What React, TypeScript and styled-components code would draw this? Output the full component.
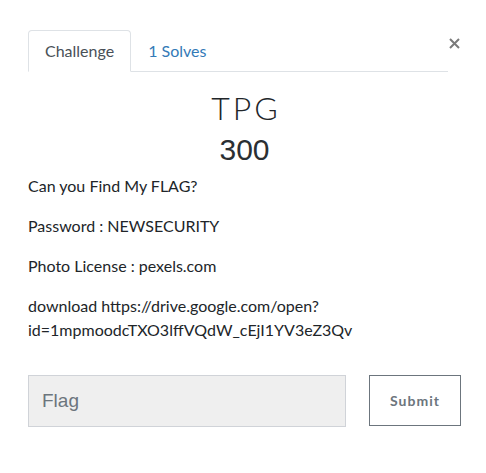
import React from "react";
import styled, { createGlobalStyle } from "styled-components";

const Global = createGlobalStyle`
  html, body { margin: 0; padding: 0; background: #fff; }
  body { font-family: Lato, "Noto Sans", sans-serif; color: #212529; }
  * { box-sizing: border-box; }
`;

const Modal = styled.div`
  width: 486px;
  padding: 30px 25px 0 28px;
`;

const Header = styled.div`
  display: flex;
  align-items: flex-start;
`;

const Tabs = styled.ul`
  flex: 1;
  display: flex;
  list-style: none;
  margin: 0;
  padding: 0;
  border-bottom: 1px solid #dee2e6;
`;

const Tab = styled.li<{ $active?: boolean }>`
  margin-bottom: -1px;
  padding: 8px 16px;
  font-size: 16px;
  line-height: 24px;
  border: 1px solid ${(p) => (p.$active ? "#dee2e6" : "transparent")};
  border-bottom-color: ${(p) => (p.$active ? "#fff" : "transparent")};
  border-top-left-radius: 4px;
  border-top-right-radius: 4px;
  background: ${(p) => (p.$active ? "#fff" : "transparent")};
  color: ${(p) => (p.$active ? "#495057" : "#337ab7")};
`;

const Close = styled.button`
  width: 13px;
  height: 13px;
  margin-top: 7px;
  padding: 0;
  border: 0;
  background: none;
  display: flex;
  align-items: center;
  justify-content: center;
`;

const Title = styled.h2`
  margin: 16px 0 0;
  padding-left: 3px;
  text-align: center;
  font-family: Lato, sans-serif;
  font-weight: 300;
  font-size: 32px;
  line-height: 40px;
  letter-spacing: 3px;
  color: #212529;
`;

const Value = styled.h3`
  margin: 2px 0 0;
  text-align: center;
  font-family: "Liberation Sans", Arial, sans-serif;
  font-weight: 400;
  font-size: 30px;
  line-height: 40px;
  color: #2b2f33;
`;

const Description = styled.div`
  margin-top: 4px;
  font-size: 16px;
  line-height: 24px;
  color: #212529;
  p { margin: 0 0 16px; }
`;

const Form = styled.form`
  display: flex;
  align-items: flex-start;
  gap: 23px;
  margin-top: 33px;
`;

const FlagInput = styled.input`
  flex: 0 0 318px;
  height: 52px;
  padding: 0 13px;
  border: 1px solid #d0d3d8;
  background: #efefef;
  font-family: "Liberation Sans", Arial, sans-serif;
  font-size: 19px;
  color: #495057;
  outline: none;
  &::placeholder { color: #6c757d; }
`;

const SubmitButton = styled.button`
  width: 93px;
  height: 51px;
  border: 1px solid #6c757d;
  background: #fff;
  color: #6c757d;
  font-family: Lato, sans-serif;
  font-weight: 700;
  font-size: 14px;
  letter-spacing: 1px;
  padding: 0;
`;

export default function App() {
  return (
    <>
      <Global />
      <Modal>
        <Header>
          <Tabs>
            <Tab $active>Challenge</Tab>
            <Tab>1 Solves</Tab>
          </Tabs>
          <Close aria-label="Close">
            <svg width="11" height="11" viewBox="0 0 11 11">
              <path d="M1 1L10 10M10 1L1 10" stroke="#7a7a7a" strokeWidth="2" />
            </svg>
          </Close>
        </Header>
        <Title>TPG</Title>
        <Value>300</Value>
        <Description>
          <p>Can you Find My FLAG?</p>
          <p>Password : NEWSECURITY</p>
          <p>Photo License : pexels.com</p>
          <p>
            download https://drive.google.com/open?
            <br />
            id=1mpmoodcTXO3lffVQdW_cEjI1YV3eZ3Qv
          </p>
        </Description>
        <Form onSubmit={(e) => e.preventDefault()}>
          <FlagInput placeholder="Flag" />
          <SubmitButton type="submit">Submit</SubmitButton>
        </Form>
      </Modal>
    </>
  );
}
